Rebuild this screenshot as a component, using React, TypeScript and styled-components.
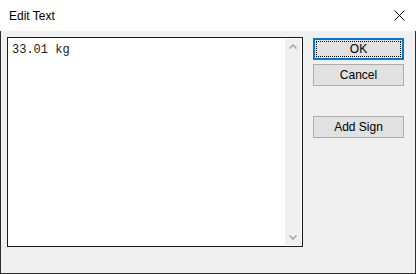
import styled, { createGlobalStyle } from 'styled-components'

const GlobalStyle = createGlobalStyle`
  html, body {
    margin: 0;
    padding: 0;
    background: #ffffff;
  }
  #root {
    width: 416px;
    height: 274px;
  }
`

const Window = styled.div`
  width: 416px;
  height: 274px;
  display: flex;
  flex-direction: column;
  box-sizing: border-box;
  font-family: 'Liberation Sans', Arial, sans-serif;
  background: #ffffff;
`

const TitleBar = styled.div`
  height: 31px;
  flex-shrink: 0;
  display: flex;
  align-items: center;
  justify-content: space-between;
  padding: 0 10px 0 9px;
  background: #ffffff;
`

const Title = styled.span`
  font-size: 12px;
  color: #000000;
  margin-top: 1px;
`

const CloseButton = styled.button`
  width: 14px;
  height: 14px;
  padding: 0;
  border: none;
  background: none;
  display: flex;
  align-items: center;
  justify-content: center;
`

const Body = styled.div`
  flex: 1;
  display: flex;
  gap: 10px;
  padding: 6px 11px 0 6px;
  background: #f0f0f0;
  border-left: 1px solid #2b2b2b;
  border-right: 1px solid #2b2b2b;
  border-bottom: 1px solid #2b2b2b;
  box-sizing: border-box;
`

const TextBox = styled.div`
  width: 297px;
  height: 210px;
  box-sizing: border-box;
  border: 1px solid #1a1a1a;
  background: #ffffff;
  padding: 1px;
  display: flex;
`

const TextContent = styled.div`
  flex: 1;
  padding: 4px 0 0 3px;
  font-family: 'Liberation Mono', 'Courier New', monospace;
  font-size: 12px;
  color: #1a1a1a;
`

const ScrollBar = styled.div`
  width: 16px;
  background: #f0f0f0;
  display: flex;
  flex-direction: column;
  justify-content: space-between;
  align-items: center;
  padding: 5px 0;
`

const SideColumn = styled.div`
  display: flex;
  flex-direction: column;
  gap: 4px;
  padding-top: 1px;
`

const DialogButton = styled.button<{ $default?: boolean; $spaced?: boolean }>`
  width: 91px;
  height: 22px;
  box-sizing: border-box;
  margin-top: ${(p) => (p.$spaced ? '26px' : '0')};
  background: #e1e1e1;
  border: ${(p) => (p.$default ? '2px solid #0078d7' : '1px solid #adadad')};
  font-family: 'Liberation Sans', Arial, sans-serif;
  font-size: 12px;
  color: #000000;
  padding: 0;
  position: relative;

  ${(p) =>
    p.$default &&
    `
    &::after {
      content: '';
      position: absolute;
      inset: 1px;
      border: 1px dotted #000000;
    }
  `}
`

const Chevron = ({ up }: { up?: boolean }) => (
  <svg width="8" height="5" viewBox="0 0 8 5">
    <path
      d={up ? 'M0.5 4.5 L4 1 L7.5 4.5' : 'M0.5 0.5 L4 4 L7.5 0.5'}
      fill="none"
      stroke="#a6a6a6"
      strokeWidth="1.5"
    />
  </svg>
)

export default function App() {
  return (
    <>
      <GlobalStyle />
      <Window>
        <TitleBar>
          <Title>Edit Text</Title>
          <CloseButton>
            <svg width="11" height="11" viewBox="0 0 11 11">
              <path d="M0.5 0.5 L10.5 10.5 M10.5 0.5 L0.5 10.5" stroke="#000" strokeWidth="1" />
            </svg>
          </CloseButton>
        </TitleBar>
        <Body>
          <TextBox>
            <TextContent>33.01 kg</TextContent>
            <ScrollBar>
              <Chevron up />
              <Chevron />
            </ScrollBar>
          </TextBox>
          <SideColumn>
            <DialogButton $default>OK</DialogButton>
            <DialogButton>Cancel</DialogButton>
            <DialogButton $spaced>Add Sign</DialogButton>
          </SideColumn>
        </Body>
      </Window>
    </>
  )
}
